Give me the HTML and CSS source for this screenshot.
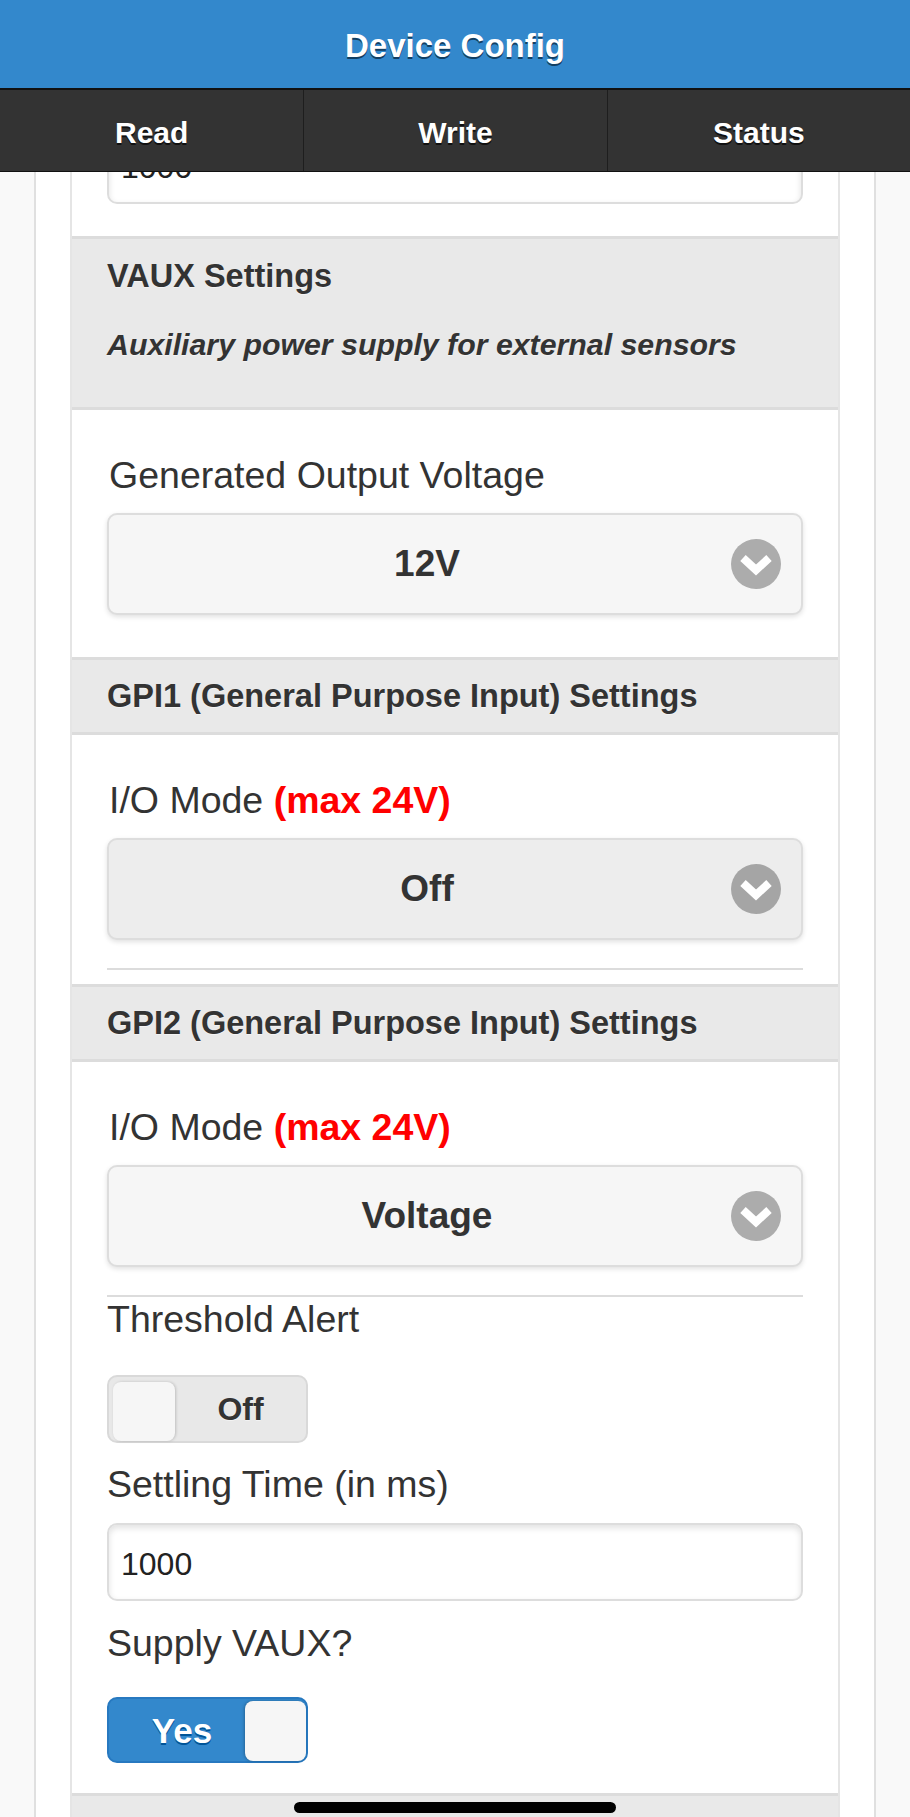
FILE: index.html
```html
<!DOCTYPE html>
<html lang="en">
<head>
<meta charset="utf-8">
<title>Device Config</title>
<link rel="stylesheet" href="styles.css">
</head>
<body>
<header class="topbar"><h1 class="topbar-title">Device Config</h1></header>
<nav class="tabs">
  <a class="tab">Read</a>
  <a class="tab">Write</a>
  <a class="tab">Status</a>
</nav>
<div class="frame">
  <div class="sheet">
    <div class="field field-first">
      <input class="text-input" type="text" value="1000">
    </div>

    <div class="divider divider-tall">
      <h2 class="divider-title">VAUX Settings</h2>
      <p class="divider-sub">Auxiliary power supply for external sensors</p>
    </div>

    <div class="field">
      <label class="lbl lbl-select">Generated Output Voltage</label>
      <div class="select">
        <span class="select-text">12V</span>
        <svg class="select-icon" viewBox="0 0 50 50" width="50" height="50"><circle cx="25" cy="25" r="25" fill="rgba(0,0,0,0.3)"/><polyline points="12,19 25,31 38,19" fill="none" stroke="#fff" stroke-width="8"/></svg>
      </div>
    </div>

    <div class="divider">
      <h2 class="divider-title">GPI1 (General Purpose Input) Settings</h2>
    </div>

    <div class="field field-gpi1">
      <label class="lbl lbl-select">I/O Mode <span class="warn">(max 24V)</span></label>
      <div class="select select-hover">
        <span class="select-text">Off</span>
        <svg class="select-icon" viewBox="0 0 50 50" width="50" height="50"><circle cx="25" cy="25" r="25" fill="rgba(0,0,0,0.3)"/><polyline points="12,19 25,31 38,19" fill="none" stroke="#fff" stroke-width="8"/></svg>
      </div>
      <div class="rule"></div>
    </div>

    <div class="divider">
      <h2 class="divider-title">GPI2 (General Purpose Input) Settings</h2>
    </div>

    <div class="field field-gpi2">
      <label class="lbl lbl-select">I/O Mode <span class="warn">(max 24V)</span></label>
      <div class="select">
        <span class="select-text">Voltage</span>
        <svg class="select-icon" viewBox="0 0 50 50" width="50" height="50"><circle cx="25" cy="25" r="25" fill="rgba(0,0,0,0.3)"/><polyline points="12,19 25,31 38,19" fill="none" stroke="#fff" stroke-width="8"/></svg>
      </div>
      <div class="rule"></div>
      <label class="lbl">Threshold Alert</label>
      <div class="flip flip-off">
        <span class="flip-handle"></span>
        <span class="flip-text">Off</span>
      </div>
      <label class="lbl lbl-settling">Settling Time (in ms)</label>
      <input class="text-input text-input-settling" type="text" value="1000">
      <label class="lbl lbl-supply">Supply VAUX?</label>
      <div class="flip flip-on">
        <span class="flip-text">Yes</span>
        <span class="flip-handle"></span>
      </div>
    </div>

    <div class="divider divider-end"></div>
  </div>
</div>
<div class="home-indicator"></div>
</body>
</html>
```

FILE: styles.css
```css
html, body {
  margin: 0;
  padding: 0;
  height: 1817px;
  overflow: hidden;
}
body {
  background: #f9f9f9;
  font-family: "Liberation Sans", Arial, Helvetica, sans-serif;
  color: #333;
}

/* top bar */
.topbar {
  height: 88px;
  box-sizing: border-box;
  padding-top: 3px;
  background: #3388cc;
}
.topbar-title {
  margin: 0;
  text-align: center;
  font-size: 33px;
  line-height: 85px;
  font-weight: bold;
  color: #fff;
  text-shadow: 0 2px 0 #123f63;
}

/* tabs */
.tabs {
  display: grid;
  grid-template-columns: 1fr 1fr 1fr;
  background: #333;
  border-top: 2px solid #111;
  border-bottom: 1px solid #111;
}
.tab {
  height: 81px;
  box-sizing: border-box;
  padding-top: 4px;
  line-height: 77px;
  text-align: center;
  font-size: 30px;
  font-weight: bold;
  color: #fff;
  text-shadow: 0 2px 0 #111;
}
.tab + .tab {
  border-left: 1px solid #1e1e1e;
}

/* page columns */
.frame {
  margin: 0 34px;
  padding: 0 34px;
  border-left: 2px solid #e0e0e0;
  border-right: 2px solid #e0e0e0;
  background: #fff;
}
.sheet {
  border-left: 2px solid #e5e5e5;
  border-right: 2px solid #e5e5e5;
  background: #fff;
  overflow: hidden;
}

/* fields */
.field {
  padding: 43px 35px 42px;
}
.field-first {
  padding: 0 35px 32px;
}
.field-first .text-input {
  margin-top: -46px;
}
.field-gpi1 {
  padding-bottom: 14px;
}
.field-gpi2 {
  padding-bottom: 30px;
}

.lbl {
  display: block;
  margin: 0;
  font-size: 37.5px;
  line-height: 44px;
  color: #333;
}
.lbl-select {
  padding-left: 2px;
}
.warn {
  color: #ff0000;
  font-weight: bold;
}
.lbl-settling {
  margin-top: 19px;
}
.lbl-supply {
  margin-top: 20px;
}

/* select button */
.select {
  margin-top: 16px;
  height: 102px;
  box-sizing: border-box;
  display: flex;
  align-items: center;
  padding: 0 20px 0 14px;
  border: 2px solid #dddddd;
  border-radius: 10px;
  background: #f6f6f6;
  box-shadow: 0 2px 5px rgba(0, 0, 0, 0.12);
}
.select-hover {
  background: #ededed;
}
.select-text {
  flex: 1;
  text-align: center;
  font-size: 37px;
  line-height: 44px;
  font-weight: bold;
  color: #333;
  text-shadow: 0 1px 0 #f3f3f3;
}
.select-icon {
  display: block;
  flex: none;
  width: 50px;
  height: 50px;
}

.rule {
  margin-top: 28px;
  height: 2px;
  background: #dcdcdc;
}

/* text input */
.text-input {
  display: block;
  width: 100%;
  height: 78px;
  box-sizing: border-box;
  margin: 0;
  padding: 4px 12px 0;
  border: 2px solid #dddddd;
  border-radius: 10px;
  background: #fff;
  box-shadow: inset 0 3px 6px rgba(0, 0, 0, 0.12);
  font-family: "Liberation Sans", Arial, Helvetica, sans-serif;
  font-size: 32px;
  color: #222;
  outline: none;
}
.text-input-settling {
  margin-top: 17px;
}

/* dividers */
.divider {
  border-top: 3px solid #dcdcdc;
  border-bottom: 3px solid #dcdcdc;
  background: #e9e9e9;
  padding: 16px 35px;
}
.divider-tall {
  padding: 17px 35px 44px;
}
.divider-title {
  margin: 0;
  font-size: 32.5px;
  line-height: 40px;
  font-weight: bold;
  color: #333;
  text-shadow: 0 1px 0 #f3f3f3;
}
.divider-sub {
  margin: 31px 0 0;
  font-size: 30.3px;
  line-height: 36px;
  font-weight: bold;
  font-style: italic;
  color: #333;
  text-shadow: 0 1px 0 #f3f3f3;
}
.divider-end {
  height: 120px;
  border-bottom: none;
}

/* flip switches */
.flip {
  width: 201px;
  box-sizing: border-box;
  display: flex;
  border-radius: 10px;
}
.flip-off {
  margin-top: 34px;
  height: 68px;
  padding: 5px 0 0 4px;
  border: 2px solid #d9d9d9;
  background: #e8e8e8;
}
.flip-on {
  margin-top: 32px;
  height: 66px;
  padding: 2px 0 0 0;
  border: 2px solid #2779c0;
  background: #3388cc;
}
.flip-handle {
  flex: none;
  width: 62px;
  background: #f6f6f6;
  border-radius: 8px;
}
.flip-off .flip-handle {
  box-shadow: 1px 0 3px rgba(0, 0, 0, 0.18);
}
.flip-on .flip-handle {
  width: 61px;
  box-shadow: -1px 0 3px rgba(0, 0, 0, 0.25);
}
.flip-text {
  flex: 1;
  display: flex;
  align-items: center;
  justify-content: center;
  font-weight: bold;
}
.flip-off .flip-text {
  font-size: 32px;
  color: #333;
  text-shadow: 0 1px 0 #f3f3f3;
  padding-bottom: 4px;
}
.flip-on .flip-text {
  font-size: 35px;
  color: #fff;
  padding-left: 10px;
  text-shadow: 0 2px 0 #005599;
}

/* iOS home indicator overlay */
.home-indicator {
  position: fixed;
  left: 50%;
  bottom: 4px;
  width: 322px;
  height: 11px;
  margin-left: -161px;
  border-radius: 6px;
  background: #000;
}
```
